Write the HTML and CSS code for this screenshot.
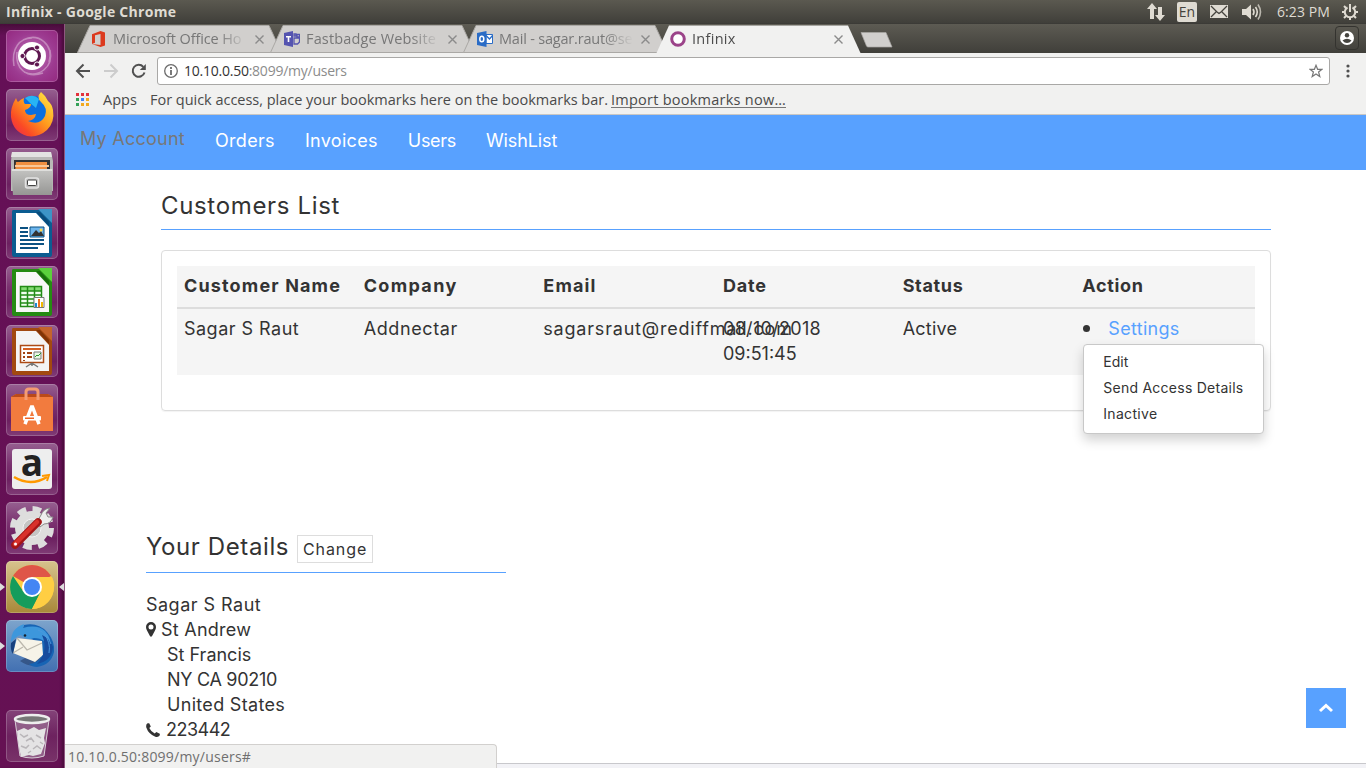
FILE: index.html
```html
<!DOCTYPE html>
<html lang="en">
<head>
<meta charset="utf-8">
<title>Infinix</title>
<link rel="stylesheet" href="styles.css">
</head>
<body>
<header class="panel">
  <span class="panel-title">Infinix - Google Chrome</span>
  <div class="indicators">
    <svg width="18" height="18" viewBox="0 0 18 18" fill="#dfdbd2"><path d="M5 0l5 6H7v10H3V6H0zM13 18l5-6h-3V4h-4v8H8z"/></svg>
    <span class="lang">En</span>
    <svg width="18" height="13" viewBox="0 0 18 13"><path d="M0 0h18v13H0z" fill="#dfdbd2"/><path d="M1 1l6 6 2 1.500L11 7l6-6M1 12l5-5M17 12l-5-5" fill="none" stroke="#45433d" stroke-width="1.300"/></svg>
    <svg width="20" height="18" viewBox="0 0 20 18" fill="none" stroke="#dfdbd2" stroke-width="1.600"><path d="M0 6h4l5-4.500v15L4 12H0z" fill="#dfdbd2" stroke="none"/><path d="M11 6q2 3 0 6M13.500 4q3.500 5 0 10"/><path d="M16 1.500q5 7.500 0 15" opacity=".75"/></svg>
    <span class="clock">6:23 PM</span>
    <svg width="16" height="18" viewBox="-8 -9 16 18" fill="none" stroke="#dfdbd2"><path d="M-2.500-4.500A5.200 5.200 0 1 0 2.500-4.500" stroke-width="2"/><path d="M0-8v8" stroke-width="2"/><path d="M-6-6l2 2M6-6l-2 2M-8 0h2.500M8 0H5.500M-6 6l2-2M6 6L4 4M0 8V5" stroke-width="2"/></svg>
  </div>
</header>
<div class="desktop">
  <aside class="launcher">
    <div class="tile tile-dash"><svg width="52" height="52" viewBox="0 0 52 52"><g fill="none" stroke="#fff" stroke-opacity=".35" stroke-width="1.500"><path d="M8 36C5 18 14 8 26 8M17 10c16-8 31 5 26 22M44 20c4 18-12 28-26 22M37 43C20 49 9 38 11 22"/></g><circle cx="26" cy="26" r="14" fill="#fff"/><circle cx="26" cy="26" r="7.500" fill="none" stroke="#5e1750" stroke-width="3"/><g stroke="#fff" stroke-width="1" fill="#5e1750"><circle cx="16.500" cy="26" r="2.600"/><circle cx="31" cy="17.500" r="2.600"/><circle cx="31" cy="34.500" r="2.600"/></g></svg></div>
    <div class="tile"><svg width="52" height="52" viewBox="0 0 52 52"><defs><linearGradient id="fox" x1="1" y1="0" x2="0" y2="1"><stop offset="0" stop-color="#fff04a"/><stop offset=".45" stop-color="#ff9a1e"/><stop offset=".75" stop-color="#fb4a25"/><stop offset="1" stop-color="#e9215c"/></linearGradient></defs><circle cx="27" cy="22" r="15" fill="#0a6fe0"/><path d="M19 9q8-5 14 1l-3 9-6-5z" fill="#27b4f5"/><path d="M10 9q1 3 2 4 3-3 6-4-1 4 1 6h6q0 4-6 6 0 5 6 5l5-1q-1 6-8 7 12 5 17-5 3-8-4-14-5-5 0-10 5 4 7 9 4 3 5 9 2 12-6 20-9 8-20 6Q7 43 5 28 4 19 10 9z" fill="url(#fox)"/></svg></div>
    <div class="tile"><svg width="52" height="52" viewBox="0 0 52 52"><defs><linearGradient id="drawer" x1="0" y1="0" x2="0" y2="1"><stop offset="0" stop-color="#c4c4c2"/><stop offset="1" stop-color="#969694"/></linearGradient></defs><path d="M6 4h39l2 9v30H5V13z" fill="#b9b9b7"/><path d="M6 4h39l1 5H5z" fill="#e3e3e2"/><path d="M8 12h36v12H8z" fill="#333"/><path d="M10 14h31v10H9z" fill="#f08f40"/><path d="M9 17h34v2H9z" fill="#f9c797"/><path d="M5 21h42l-1 26H7z" fill="url(#drawer)"/><path d="M6 21h40v2H6z" fill="#dededc"/><rect x="19.500" y="30" width="13" height="10" rx="2" fill="#bbb" stroke="#e2e2e2" stroke-width="1.500"/><rect x="21.500" y="32" width="9" height="5.500" rx="1" fill="#fff" stroke="#444"/></svg></div>
    <div class="tile tile-doc"><svg width="52" height="52" viewBox="0 0 52 52"><path d="M7 3h37q2 0 2 2v42q0 3-2 3H8q-2 0-2-3V5q0-2 1-2z" fill="#0b5c91"/><path d="M10 6h20l13 14v26H10z" fill="#fff"/><path d="M32 2h14v14z" fill="#3d94c6"/><path d="M30 5l13 14v-4L34 5z" fill="#0a4c7a"/><g fill="#0b5182"><path d="M14 20h8v2h-8zM14 24h8v2h-8zM14 28h8v2h-8zM14 32h24v2H14zM14 36h24v2H14zM14 40h18v2H14z"/></g><path d="M24 20h14v10H24z" fill="#6db5ec" stroke="#0b5182"/><path d="M25 29l5-6 3 3 2-2 3 5z" fill="#333"/><circle cx="35" cy="23" r="1.500" fill="#ffd84a"/></svg></div>
    <div class="tile tile-doc"><svg width="52" height="52" viewBox="0 0 52 52"><path d="M7 3h37q2 0 2 2v42q0 3-2 3H8q-2 0-2-3V5q0-2 1-2z" fill="#258b13"/><path d="M10 6h20l13 14v26H10z" fill="#f8f8f8"/><path d="M32 2h14v14z" fill="#5bd03c"/><path d="M30 5l13 14v-4L34 5z" fill="#196e0c"/><path d="M14.500 20.500h21v20h-21z" fill="#f2fff0"/><path d="M14 20h22v5H14z" fill="#83db73"/><path d="M14.500 20.500h21v20h-21zM14 25h22M14 29h22M14 33h22M14 37h22M21.500 20v20M28.500 20v20" fill="none" stroke="#228b16" stroke-width="1.500"/><path d="M28 31.500h10v10H28z" fill="#fff" stroke="#777"/><path d="M29 37h2v4h-2z" fill="#1d8ad0"/><path d="M32 33h2v8h-2z" fill="#ef7020"/><path d="M35 36h2v5h-2z" fill="#f2b900"/></svg></div>
    <div class="tile tile-doc"><svg width="52" height="52" viewBox="0 0 52 52"><path d="M7 3h37q2 0 2 2v42q0 3-2 3H8q-2 0-2-3V5q0-2 1-2z" fill="#a24910"/><path d="M10 6h20l13 14v26H10z" fill="#f4f4f4"/><path d="M32 2h14v14z" fill="#c4642c"/><path d="M30 5l13 14v-4L34 5z" fill="#803407"/><path d="M14.500 20.500h23v17h-23z" fill="#fff" stroke="#ad4b16" stroke-width="1.500"/><path d="M17 23h18v2H17z" fill="#d45f22"/><path d="M17 27h2v2h-2zM17 31h2v2h-2zM17 35h2v1h-2zM21 27h5v2h-5zM21 31h5v2h-5z" fill="#a24414"/><path d="M28 27h7v7h-7z" fill="#e8f7e6" stroke="#777"/><path d="M29 32l2-2 1 1 3-3" fill="none" stroke="#2a9b2a"/><path d="M26 38v3M26 38l-6 4M26 38l6 4" stroke="#777" stroke-width="1.500"/></svg></div>
    <div class="tile"><svg width="52" height="52" viewBox="0 0 52 52"><path d="M5 13l5-3h32l5 3v34H5z" fill="#f27b3e"/><path d="M5 13l5-3h32l5 3z" fill="#bb4a1a"/><path d="M20 16V8q0-3 3-3h6q3 0 3 3v8" fill="none" stroke="#f49b72" stroke-width="3"/><path d="M19 40l6.500-17h1L33 40" fill="none" stroke="#fff" stroke-width="3.500"/><rect x="17" y="32" width="18" height="4.500" rx="1" fill="#fff"/><path d="M19 33.500h9V35h-9z" fill="#ee6527"/></svg></div>
    <div class="tile"><svg width="52" height="52" viewBox="0 0 52 52"><rect x="6" y="6" width="40" height="40" rx="3" fill="#eee"/><text x="26" y="33" text-anchor="middle" class="letter-a">a</text><path d="M8 34q17 10 33 0" fill="none" stroke="#f90" stroke-width="2.600"/><path d="M36 33l7-1-2 6" fill="none" stroke="#f90" stroke-width="2"/></svg></div>
    <div class="tile"><svg width="52" height="52" viewBox="0 0 52 52"><circle cx="26" cy="26" r="19" fill="none" stroke="#ddd" stroke-width="6" stroke-dasharray="8.500 6.420"/><circle cx="26" cy="26" r="17" fill="#dededd"/><circle cx="26" cy="26" r="9" fill="#c5c5c4" stroke="#f2f2f2"/><path d="M31 20l4-7q2-6 9-7l-4 5 2 4 5 0q-2 7-9 7l-4 3z" fill="#eee" stroke="#888"/><path d="M9 43l23-23" stroke="#a51515" stroke-width="7.500" stroke-linecap="round"/><path d="M9 42l22-22" stroke="#d8312b" stroke-width="4.500" stroke-linecap="round"/><circle cx="9.500" cy="42" r="1.500" fill="#fff"/></svg></div>
    <div class="tile tile-chrome run active"><svg width="52" height="52" viewBox="0 0 52 52"><circle cx="26" cy="26" r="22" fill="#ffce43"/><path d="M26 26L7 15A22 22 0 0 1 45 15z" fill="#df5548"/><path d="M7 15A22 22 0 0 0 26 48l9-18-18 0z" fill="#159c5c"/><path d="M26 16h20q3 6 2 11-1 8-5 13-7 8-17 8l10-19z" fill="#ffce43"/><circle cx="26" cy="26" r="10" fill="#fff"/><circle cx="26" cy="26" r="8" fill="#4486f4"/></svg></div>
    <div class="tile tile-bird run"><svg width="52" height="52" viewBox="0 0 52 52"><path d="M14 41q10 7 20 4l4-8-14-2z" fill="#26406b" opacity=".6"/><path d="M18 5q14-3 23 7 8 9 7 20-3 13-17 15-5 0-8-3 10-1 13-9 0-14-21-21z" fill="#1764b4"/><path d="M7 33l4-15 25 3 1 14-8 7z" fill="#f6f3e8"/><path d="M11 18l10 12 15-7M7 33l10-6" fill="none" stroke="#bbb7ad" stroke-width="1.300"/><path d="M5 22Q5 8 18 4l-1 4q14-4 22 3 8 8 4 19-3-12-15-12-7 3-13-3-5 1-10 7z" fill="#3d97dc"/><path d="M36 15q7 16-5 29 15-3 16-17-2-8-11-12z" fill="#174c9e"/><path d="M38 14q7 8 5 19M32 10q9 3 13 14" fill="none" stroke="#4c98dc"/><path d="M5 23q-1 7 2 11l3-15z" fill="#17407e"/><circle cx="19" cy="15.500" r="1.300" fill="#17202e"/></svg></div>
    <div class="tile trash"><svg width="52" height="52" viewBox="0 0 52 52"><path d="M9 10h34l-5 36q-12 4-24 0z" fill="#c7b6c5" fill-opacity=".35" stroke="#d9cfd8" stroke-width="1"/><path d="M11 21l7-3 4 2 6-3 5 3 7-2-2 10 1 5-4 11-8 2-4-1-8 2-2-10-1-7z" fill="#e4e3e4"/><path d="M14 24l4 3 4-2M20 31l5-3 3 4M30 25l5 3M15 36l5 2 3-3M27 39l4-3 4 3M22 43l3-2M34 32l3 2" stroke="#b9b6b9" fill="none" stroke-width="1.500"/><ellipse cx="26" cy="9" rx="17" ry="4" fill="#777" stroke="#eee" stroke-width="2.500"/></svg></div>
  </aside>
  <div class="browser">
    <div class="tabstrip">
      <div class="tab"><svg class="tab-shape" width="205" height="28"><path d="M.5 27.500L13 .5h179l12.500 27z" fill="#d1cfcd" stroke="#aaa8a5"/></svg>
        <svg class="fav" width="16" height="16" viewBox="0 0 16 16"><path d="M9.500 0L14 1.500v13L9.500 16 1 13l8.500 1V3L4 4.300v7.500L1 13V3.200z" fill="#dc3a1e"/></svg><span class="tab-text t1">Microsoft Office Ho</span><svg class="close" width="9" height="9" viewBox="0 0 9 9"><path d="M.5.5l8 8M8.500.5l-8 8"/></svg></div>
      <div class="tab"><svg class="tab-shape" width="205" height="28"><path d="M.5 27.500L13 .5h179l12.500 27z" fill="#d1cfcd" stroke="#aaa8a5"/></svg>
        <svg class="fav" width="16" height="16" viewBox="0 0 16 16"><path d="M0 2l9-2v16l-9-2z" fill="#5554b0"/><path d="M2 5h5v1.500H5.300V11H3.700V6.500H2z" fill="#fff"/><path d="M10 3h2v2h-2zM13 3.500h2.500V6H13zM10 7h5.500v4l-2 2H10z" fill="none" stroke="#5554b0" stroke-width="1.300"/></svg><span class="tab-text t2">Fastbadge Website</span><svg class="close" width="9" height="9" viewBox="0 0 9 9"><path d="M.5.5l8 8M8.500.5l-8 8"/></svg></div>
      <div class="tab"><svg class="tab-shape" width="205" height="28"><path d="M.5 27.500L13 .5h179l12.500 27z" fill="#d1cfcd" stroke="#aaa8a5"/></svg>
        <svg class="fav" width="16" height="16" viewBox="0 0 16 16"><path d="M9 3.500h6.500v9H9z" fill="#fff" stroke="#2a6cc6"/><path d="M9 4.500l3.500 3.500L16 4" stroke="#2a6cc6" fill="none" stroke-width="1.300"/><path d="M0 2l9.500-2v16L0 14z" fill="#2a6cc6"/><ellipse cx="4.800" cy="8" rx="2" ry="2.800" fill="none" stroke="#fff" stroke-width="1.500"/></svg><span class="tab-text t3">Mail - sagar.raut@se</span><svg class="close" width="9" height="9" viewBox="0 0 9 9"><path d="M.5.5l8 8M8.500.5l-8 8"/></svg></div>
      <div class="tab current"><svg class="tab-shape" width="205" height="28"><path d="M.5 28L13 .5h179L204.500 28z" fill="#f1f1f0"/></svg>
        <svg class="fav" width="16" height="16" viewBox="0 0 16 16"><circle cx="8" cy="8" r="6.300" fill="#fff" stroke="#9b4389" stroke-width="3"/></svg><span class="tab-text t4">Infinix</span><svg class="close" width="9" height="9" viewBox="0 0 9 9"><path d="M.5.5l8 8M8.500.5l-8 8"/></svg></div>
      <svg class="newtab" width="34" height="16" viewBox="0 0 34 16"><path d="M1 .5h25l6 14.500H8q-1 0-1.500-1z" fill="#d1cfcd" stroke="#aaa8a5" stroke-width=".7"/></svg>
      <span class="profile"><svg width="14" height="14" viewBox="0 0 14 14"><circle cx="7" cy="7" r="7" fill="#fff"/><circle cx="7" cy="4.300" r="2.200" fill="#45443f"/><path d="M2.500 9.500Q7 6 11.500 9.500 9.500 12 7 12T2.500 9.500z" fill="#45443f"/></svg></span>
    </div>
    <div class="toolbar">
      <svg width="16" height="16" viewBox="0 0 16 16" fill="none" stroke="#505050" stroke-width="2"><path d="M15 8H2.500M8.500 1.500L2 8l6.500 6.500"/></svg>
      <svg width="16" height="16" viewBox="0 0 16 16" fill="none" stroke="#ccc" stroke-width="2"><path d="M1 8h12.500M7.500 1.500L14 8l-6.500 6.500"/></svg>
      <svg width="16" height="16" viewBox="0 0 16 16" fill="none" stroke="#505050" stroke-width="2"><path d="M13.500 9.500A6 6 0 1 1 12.300 3.800"/><path d="M14.800 1v6H8.800z" fill="#505050" stroke="none"/></svg>
      <div class="omnibox">
        <svg width="14" height="14" viewBox="0 0 14 14" fill="none" stroke="#6c6c6c"><circle cx="7" cy="7" r="6.300" stroke-width="1.300"/><path d="M7 3v2M7 6v5" stroke-width="1.800"/></svg>
        <span class="url"><b>10.10.0.50</b>:8099/my/users</span>
        <svg class="star" width="14" height="14" viewBox="0 0 14 14"><path d="M7 1.300l1.600 4H13L9.600 8l1.200 4.500L7 9.900l-3.800 2.600L4.400 8 1 5.300h4.400z" fill="none" stroke="#777" stroke-width="1.200"/></svg>
      </div>
      <svg class="menu-dots" width="4" height="14" viewBox="0 0 4 14" fill="#505050"><circle cx="2" cy="2" r="1.600"/><circle cx="2" cy="7" r="1.600"/><circle cx="2" cy="12" r="1.600"/></svg>
    </div>
    <div class="bookmarks">
      <svg width="13" height="13" viewBox="0 0 13 13"><path d="M0 0h3v3H0zM5 0h3v3H5zM10 0h3v3h-3z" fill="#e3323c"/><path d="M0 5h3v3H0zM0 10h3v3H0z" fill="#35a057"/><path d="M5 5h3v3H5z" fill="#3f83f8"/><path d="M10 5h3v3h-3zM5 10h3v3H5zM10 10h3v3h-3z" fill="#f2a91f"/></svg>
      <span class="apps">Apps</span><span class="hint">For quick access, place your bookmarks here on the bookmarks bar.</span><span class="import">Import bookmarks now…</span>
    </div>
    <div class="page">
      <nav class="nav"><a class="brand s2">My Account</a><a class="s3">Orders</a><a class="s3">Invoices</a><a class="tight">Users</a><a class="wish">WishList</a></nav>
      <main class="main">
        <section class="customers">
          <h2><span>Customers List</span></h2>
          <div class="card">
            <table>
              <thead><tr><th class="s11">Customer Name</th><th class="s13">Company</th><th class="s11">Email</th><th class="s8">Date</th><th class="s7">Status</th><th class="s7">Action</th></tr></thead>
              <tbody><tr><td class="s5">Sagar S Raut</td><td class="s6">Addnectar</td><td class="s8">sagarsraut@rediffmail.com</td><td><span class="s3">08/10/2018</span><br><span>09:51:45</span></td><td class="s2">Active</td>
              <td><div class="action"><i class="dot"></i><a class="s3">Settings</a>
                <div class="dropdown"><a>Edit</a><a class="s2">Send Access Details</a><a class="s3">Inactive</a></div></div></td></tr></tbody>
            </table>
          </div>
        </section>
        <section class="details">
          <h2><span>Your Details</span><button type="button">Change</button></h2>
          <address>
            <div class="s5">Sagar S Raut</div>
            <div class="s2"><svg class="pin" width="10" height="15" viewBox="0 0 10 15"><path fill-rule="evenodd" d="M5 0a5 5 0 0 1 5 5q0 1.500-1 3.500L5.800 14.500H4.200L1 8.500Q0 6.500 0 5a5 5 0 0 1 5-5zm0 2.500a2.500 2.500 0 1 0 0 5 2.500 2.500 0 0 0 0-5z" fill="#333"/></svg>St Andrew</div>
            <div class="indent">St Francis</div>
            <div class="indent tight">NY CA 90210</div>
            <div class="indent s3">United States</div>
            <div class="digits"><svg class="phone" width="14" height="14" viewBox="0 0 14 14"><path d="M3.200.2L4.800 3.600 3.300 5.100Q5 8.700 8.700 10.600L10.300 9l3.500 1.800q.3 1.600-.9 2.500-1.600 1-3.600.4Q2.500 11 .3 4.500-.3 1.200 1.600.3z" fill="#333"/></svg>223442</div>
          </address>
        </section>
      </main>
      <div class="footer"></div>
      <div class="status">10.10.0.50:8099/my/users#</div>
      <a class="to-top"><svg width="16" height="10" viewBox="0 0 16 10"><path d="M2 8l6-5.500L14 8" fill="none" stroke="#fff" stroke-width="3"/></svg></a>
    </div>
  </div>
</div>
</body>
</html>
```
FILE: styles.css
```css
* { box-sizing: border-box; }
body { margin: 0; width: 1366px; height: 768px; overflow: hidden; display: flex; flex-direction: column; background: #fff; color: #333; font: 15px "Open Sans", sans-serif; }
svg { display: block; flex: none; }

/* Letter-spacing steps */
.tight { letter-spacing: -.3px; }
.s2 { letter-spacing: .25px; }
.s3 { letter-spacing: .31px; }
.s5 { letter-spacing: .48px; }
.s6 { letter-spacing: .6px; }
.s7 { letter-spacing: .68px; }
.s8 { letter-spacing: .8px; }
.s11 { letter-spacing: 1.15px; }
.s13 { letter-spacing: 1.35px; }

.panel { height: 24px; flex: none; display: flex; align-items: center; justify-content: space-between; padding: 0 8px 0 6px; color: #dfdbd2; background: linear-gradient(#5b5950, #403f3a); border-bottom: 1px solid #3c3b37; }
.panel-title { font-size: 14px; font-weight: 700; letter-spacing: .29px; }
.indicators { display: flex; align-items: center; }
.lang { margin: 0 13px 0 12px; width: 20px; height: 20px; border-radius: 2px; background: #dfdbd2; color: #45433d; font-size: 14px; line-height: 20px; text-align: center; }
.indicators svg:nth-of-type(3) { margin-left: 14px; }
.clock { margin: 0 12px 0 15px; font-size: 14px; white-space: nowrap; letter-spacing: .1px; }

.desktop { flex: 1; min-height: 0; display: flex; }
.launcher { width: 65px; flex: none; display: flex; flex-direction: column; gap: 7px; padding: 6px 0 6px 6px; background: linear-gradient(#4a0d3c, #651057 12px, #651153); border-right: 1px solid #8f5580; box-shadow: inset -3px 0 3px -1px #490b3a; }
.tile { position: relative; width: 52px; height: 52px; flex: none; border-radius: 5px; background: linear-gradient(#966090, #7b3270 40%, #6c2060 70%, #803b76); box-shadow: inset 0 0 0 1px rgba(255,255,255,.2); }
.tile-dash { background: radial-gradient(#c57cc0, #9d3b91 60%, #93287f); }
.tile-chrome { background: linear-gradient(#d7c38d, #a88839); }
.tile-bird { background: linear-gradient(#7da4cc, #4270b2); }
.trash { margin-top: auto; background: linear-gradient(#844379, #6d225f 50%, #793369); }
.run::before, .active::after { content: ""; position: absolute; top: 22px; left: -6px; border: 4px solid transparent; border-left: 5px solid #ddd; border-right: 0; }
.active::after { left: auto; right: -6px; border-left: 0; border-right: 5px solid #ddd; }
.letter-a { font: 700 37px "Open Sans", sans-serif; fill: #222; }

.browser { flex: 1; min-width: 0; display: flex; flex-direction: column; }
.tabstrip { height: 29px; flex: none; display: flex; padding: 1px 7px 0 12px; background: linear-gradient(#5d5b53, #403f3a); }
.tab { position: relative; width: 205px; height: 28px; flex: none; display: flex; align-items: center; padding-left: 14px; color: #777; }
.tab + .tab { margin-left: -12px; }
.tab-shape { position: absolute; left: 0; top: 0; }
.fav { position: relative; margin-right: 6px; }
.tab-text { position: relative; width: 135px; padding-bottom: 2px; overflow: hidden; white-space: nowrap; font-size: 14.500px; -webkit-mask-image: linear-gradient(90deg, #000 105px, transparent 134px); mask-image: linear-gradient(90deg, #000 105px, transparent 134px); }
.t1 { letter-spacing: -.12px; }
.t2 { letter-spacing: .15px; }
.t3 { letter-spacing: -.2px; }
.t4 { letter-spacing: .3px; }
.current { color: #4c4c4c; }
.close { position: relative; margin-left: 7px; fill: none; stroke: #8b8b8b; stroke-width: 1.4; }
.newtab { margin: 7px 0 0 -1px; }
.profile { margin: 1px 0 0 auto; width: 24px; height: 24px; display: grid; place-items: center; border: 1px solid #34332f; border-radius: 4px; }

.toolbar { height: 36px; flex: none; display: flex; align-items: center; gap: 12px; padding: 0 16px 0 10px; background: #f1f1f0; }
.omnibox { flex: 1; margin-left: -2px; height: 28px; display: flex; align-items: center; padding: 0 6px; background: #fff; border: 1px solid #a9a8a6; border-radius: 3px; }
.url { margin-left: 6px; padding-bottom: 1px; color: #8c8c8c; font-size: 14px; letter-spacing: -.24px; white-space: nowrap; }
.url b { font-weight: 400; color: #333; }
.star { margin-left: auto; }
.menu-dots { margin-left: 4px; }
.bookmarks { height: 26px; flex: none; display: flex; align-items: center; padding: 0 11px 4px; background: #f1f1f0; border-bottom: 1px solid #c9c7c4; color: #4a4a4a; font-size: 14.500px; white-space: nowrap; }
.apps { margin-left: 14px; width: 35px; }
.hint { margin-left: 12px; letter-spacing: -.02px; }
.import { margin-left: 3px; border-bottom: 1px solid #777; line-height: 15px; letter-spacing: .25px; }

.page { position: relative; flex: 1; min-height: 0; overflow: hidden; background: #fff; font: 18px/25px Inter, sans-serif; }
.nav { height: 55px; display: flex; padding: 12px 15px; background: #58a1ff; color: #fff; white-space: nowrap; }
.nav a { padding-top: 1px; margin-right: 30px; }
.nav .brand { padding-top: 0; margin-top: -1px; color: #777; }
.nav .wish { letter-spacing: -.12px; }
h2 { margin: 0; font-size: 24px; line-height: 26px; font-weight: 400; letter-spacing: .66px; border-bottom: 1px solid #58a1ff; }
.customers { width: 1110px; margin: 23px 0 0 96px; }
.customers h2 { height: 37px; }
.card { height: 161px; margin-top: 20px; padding: 15px; border: 1px solid #ddd; border-radius: 4px; box-shadow: 0 1px 1px rgba(0,0,0,.05); }
table { width: 100%; table-layout: fixed; border-collapse: separate; border-spacing: 0; background: #f5f5f5; }
th, td { padding: 7px 7px 9px; text-align: left; vertical-align: top; white-space: nowrap; }
th { font-weight: 700; border-bottom: 2px solid #ddd; }
.action { position: relative; display: flex; align-items: center; color: #58a1ff; }
.dot { width: 7px; height: 7px; margin: 0 18px 0 1px; border-radius: 50%; background: #333; }
.dropdown { position: absolute; z-index: 2; left: 1px; top: 28px; width: 181px; height: 90px; padding: 4px 19px; display: flex; flex-direction: column; align-items: flex-start; background: #fff; border: 1px solid #c8c8c8; border-radius: 4px; box-shadow: 0 6px 12px rgba(0,0,0,.18); color: #333; font-size: 14px; line-height: 26px; letter-spacing: 0; }
.details { width: 360px; margin: 122px 0 0 81px; }
.details h2 { height: 40px; display: flex; align-items: flex-start; gap: 8px; letter-spacing: .6px; }
.details h2 > span { padding-top: 1px; white-space: nowrap; }
.details button { width: 76px; height: 28px; margin-top: 2px; padding: 0; border: 1px solid #ddd; background: #fff; color: #333; font: 16px Inter, sans-serif; letter-spacing: .9px; }
address { margin-top: 19px; font-style: normal; }
address div { display: flex; align-items: center; white-space: nowrap; }
.digits { letter-spacing: -.5px; }
.pin { margin-right: 5px; }
.phone { margin-right: 6px; }
.indent { padding-left: 21px; }
.footer { position: absolute; left: 0; right: 0; bottom: 0; height: 5px; background: #f2f2f6; border-top: 1px solid #c8c8cc; }
.status { position: absolute; left: 0; bottom: 0; width: 432px; height: 24px; padding-left: 3px; background: #f1f1f0; border: 1px solid #d2d0ce; border-width: 1px 1px 0 0; border-radius: 0 4px 0 0; color: #6f6f6f; font: 14px/23px "Open Sans", sans-serif; letter-spacing: .22px; }
.to-top { position: absolute; right: 20px; bottom: 40px; width: 40px; height: 40px; display: grid; place-items: center; background: #58a1ff; }
```
